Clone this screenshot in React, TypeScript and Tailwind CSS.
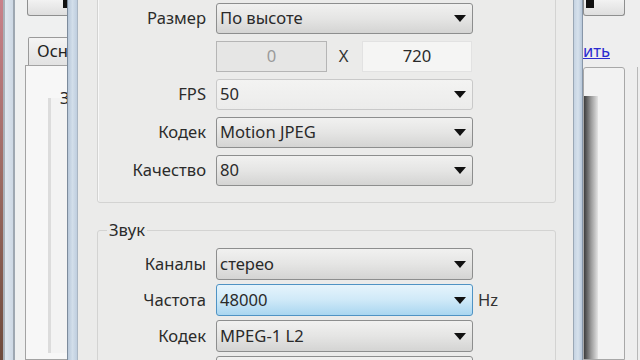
import React from 'react';

const Arrow = () => (
  <svg width="12" height="7" viewBox="0 0 12 7" className="shrink-0">
    <path d="M0 0H12L6 7Z" fill="#111" />
  </svg>
);

interface ComboProps {
  value: string;
  variant?: 'normal' | 'light' | 'hover';
}

const Combo: React.FC<ComboProps> = ({ value, variant = 'normal' }) => {
  const look =
    variant === 'hover'
      ? 'border-[#4f93c4] bg-gradient-to-b from-[#e6f4fc] via-[#cfe9f8] to-[#a9d6f0]'
      : variant === 'light'
        ? 'border-[#c9c9c9] bg-gradient-to-b from-[#f3f3f2] to-[#ececeb]'
        : 'border-[#8d8e8e] bg-gradient-to-b from-[#f1f1f0] via-[#e5e5e4] to-[#d4d4d3]';
  return (
    <div
      className={`flex h-full w-[257px] items-center justify-between rounded-[3px] border pl-[3px] pr-[6px] text-[#2a2a2a] ${look}`}
    >
      <span>{value}</span>
      <Arrow />
    </div>
  );
};

const Row: React.FC<{ label: string; children: React.ReactNode; h?: string }> = ({ label, children, h = 'h-[31px]' }) => (
  <div className={`flex items-center ${h}`}>
    <div className="w-[108px] text-right text-[#2b2b2b]">{label}</div>
    <div className="ml-[10px] flex h-full items-center">{children}</div>
  </div>
);

export default function App() {
  return (
    <div className="flex h-[360px] w-[640px] overflow-hidden bg-[#ececeb] font-['Noto_Sans',sans-serif] text-[16.6px] leading-none">
      {/* desktop strip */}
      <div className="w-[3px] bg-gradient-to-b from-[#c9818b] via-[#9c6a62] to-[#6e4a3c]" />

      {/* background window, left part */}
      <div className="flex w-[64px]">
        <div className="w-[2px] bg-[#a9b0b8]" />
        <div className="w-[8px] bg-gradient-to-r from-[#dfe6ee] to-[#cdd8e4]" />
        <div className="w-[2px] bg-[#9ea7b1]" />
        <div className="flex w-[52px] flex-col overflow-hidden bg-[#eff0f0]">
          <div className="ml-[12px] flex h-[16px] w-[60px] shrink-0 rounded-b-[3px] border border-t-0 border-[#8e8f8f] bg-gradient-to-b from-[#f2f2f2] to-[#dedede] pl-[35px]">
            <div className="h-[8px] w-[6px] bg-[#111]" />
          </div>
          <div className="ml-[13px] mt-[21px] flex h-[28px] w-[60px] shrink-0 items-center rounded-t-[2px] border border-b-0 border-[#9a9a9a] bg-gradient-to-b from-[#f4f4f4] to-[#e2e2e2] pl-[8px] whitespace-nowrap text-[#222]">
            Осн
          </div>
          <div className="ml-[10px] flex w-[60px] flex-1 flex-col border border-[#a3a3a3] bg-[#f7f7f7]">
            <div className="ml-[22px] mt-[32px] flex w-[60px] flex-1 flex-col border-l-[3px] border-[#dcdcdc] bg-[#f3f3f3]">
              <div className="ml-[9px] -mt-[8px] whitespace-nowrap text-[#222]">З</div>
            </div>
            <div className="h-[6px]" />
          </div>
        </div>
      </div>

      {/* dialog frame left */}
      <div className="w-[11px] border-l border-r border-l-[#7c8b9c] border-r-[#aab6c3] bg-gradient-to-r from-[#b8c8da] via-[#d2deea] to-[#bfcedf]" />

      {/* dialog client */}
      <div className="flex w-[495px] flex-col bg-[#ebebea] pl-[19px]">
        <div className="-mt-[20px] flex w-[459px] flex-col gap-[7px] rounded-[3px] border border-[#d3d3d2] pb-[16px] pt-[22px] shadow-[inset_1px_1px_0_#f8f8f8]">
          <Row label="Размер">
            <Combo value="По высоте" />
          </Row>
          <Row label="">
            <div className="flex h-full w-[111px] items-center justify-center border border-[#b5b5b5] bg-[#e6e6e5] text-[#9a9a9a]">0</div>
            <div className="w-[33px] text-center text-[#333]">X</div>
            <div className="ml-[2px] flex h-full w-[110px] items-center justify-center border border-[#e2e2e2] bg-[#f5f5f4] text-[#2a2a2a]">720</div>
          </Row>
          <Row label="FPS">
            <Combo value="50" variant="light" />
          </Row>
          <Row label="Кодек">
            <Combo value="Motion JPEG" />
          </Row>
          <Row label="Качество">
            <Combo value="80" />
          </Row>
        </div>

        <fieldset className="mt-[16px] w-[459px] rounded-[3px] border border-[#d3d3d2] pb-[10px]">
          <legend className="ml-[9px] px-[2px] text-[#2b2b2b] leading-[22px]">Звук</legend>
          <div className="mt-[7px] flex flex-col gap-[4px]">
            <Row label="Каналы" h="h-[32px]">
              <Combo value="стерео" />
            </Row>
            <Row label="Частота" h="h-[32px]">
              <Combo value="48000" variant="hover" />
              <span className="ml-[5px] text-[#333]">Hz</span>
            </Row>
            <Row label="Кодек" h="h-[32px]">
              <Combo value="MPEG-1 L2" />
            </Row>
            <Row label="" h="h-[32px]">
              <Combo value="" />
            </Row>
          </div>
        </fieldset>
      </div>

      {/* dialog frame right */}
      <div className="w-[10px] border-l border-r border-l-[#9aa7b5] border-r-[#8796a8] bg-gradient-to-r from-[#c5d3e2] via-[#d6e1ec] to-[#b8c8da]" />

      {/* background window, right part */}
      <div className="flex w-[57px] flex-col overflow-hidden bg-[#eeeeee]">
        <div className="flex h-[16px] w-[42px] shrink-0 rounded-b-[3px] border border-t-0 border-[#8e8f8f] bg-gradient-to-b from-[#f2f2f2] to-[#dedede] pl-[2px]">
          <div className="h-[8px] w-[8px] bg-[#111]" />
        </div>
        <div className="mt-[27px] flex h-[18px] w-[27px] shrink-0 justify-end overflow-hidden">
          <span className="whitespace-nowrap text-[#2b2bd0] underline">ить</span>
        </div>
        <div className="mt-[6px] flex flex-1">
          <div className="flex w-[42px] flex-col rounded-t-[3px] border border-[#a8a8a8] bg-[#f2f2f2]">
            <div className="mt-[28px] w-[14px] flex-1 bg-gradient-to-r from-[#3e3e3e] via-[#9a9a9a] to-[#e4e4e4]" />
          </div>
          <div className="ml-[12px] w-[1px] bg-[#b8b8b8]" />
        </div>
      </div>
    </div>
  );
}
